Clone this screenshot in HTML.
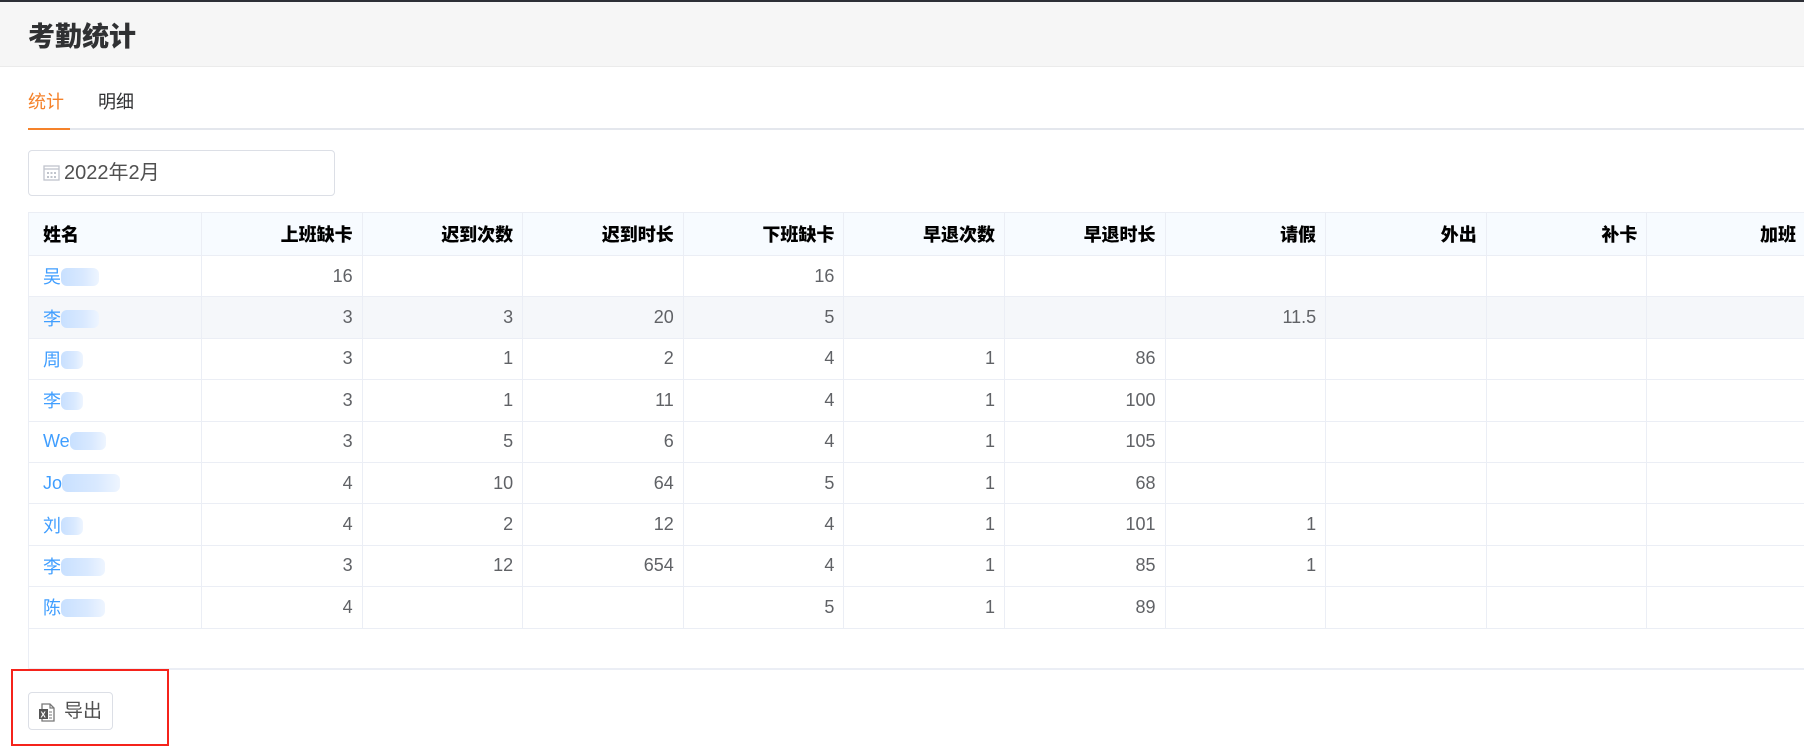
<!DOCTYPE html>
<html><head><meta charset="utf-8"><style>
*{margin:0;padding:0;box-sizing:border-box}
body{width:1804px;height:755px;overflow:hidden;background:#fff;font-family:"Liberation Sans","Noto Sans CJK SC",sans-serif;position:relative}
.top{position:absolute;left:0;top:0;width:1804px;height:2px;background:#2d2f36}
.hdr{position:absolute;left:0;top:2px;width:1804px;height:65px;background:#f6f6f6;border-bottom:1px solid #ebebeb}
.hdr h1{position:absolute;left:28px;top:18px;font-size:27px;font-weight:900;color:#303133;line-height:34px}
.tab{position:absolute;top:90px;font-size:18px;line-height:24px}
.tabline{position:absolute;left:28px;top:128px;width:1776px;height:2px;background:#e4e7ed}
.tabact{position:absolute;left:28px;top:128px;width:42px;height:2px;background:#f5822a}
.date{position:absolute;left:28px;top:150px;width:307px;height:46px;border:1px solid #dcdfe6;border-radius:4px}
.date span{position:absolute;left:35px;top:10px;font-size:20px;color:#505050;line-height:24px}
table{position:absolute;left:28px;top:212px;border-collapse:collapse;table-layout:fixed;width:1778px}
td,th{border:1px solid #ebeef5;height:41.4px;padding:0 9px;font-size:18px;text-align:right;color:#606266;white-space:nowrap;overflow:hidden}
th{height:43px;background:#f7fbff;color:#000;font-weight:900}
th:first-child,td:first-child{text-align:left;padding-left:14px}
td:first-child{color:#409eff}
tr.alt td{background:#f5f7fa}
.b{display:inline-block;height:18px;vertical-align:-3px;background:linear-gradient(90deg,#c8e0ff,#d9e9ff 60%,#eef5ff);border-radius:6px}
.bot{position:absolute;left:28px;top:668px;width:1776px;height:2px;background:#ebeef5}
.side{position:absolute;left:28px;top:628px;width:1px;height:40px;background:#ebeef5}
.btn{position:absolute;left:28px;top:692px;width:85px;height:38px;border:1px solid #dcdfe6;border-radius:4px;font-size:19px;color:#505050}
.btn span{position:absolute;left:35px;top:7px;line-height:24px}
.red{position:absolute;left:11px;top:669px;width:158px;height:77px;border:2px solid #f5231b}
</style></head><body>
<div class="top"></div>
<div class="hdr"><h1>考勤统计</h1></div>
<div class="tab" style="left:28px;color:#f5822a">统计</div>
<div class="tab" style="left:98px;color:#303133">明细</div>
<div class="tabline"></div><div class="tabact"></div>
<div class="date"><svg style="position:absolute;left:14px;top:13px" width="17" height="17" viewBox="0 0 17 17"><rect x="1" y="2" width="15" height="14" fill="none" stroke="#c0c4cc" stroke-width="1.3"/><line x1="1" y1="5" x2="16" y2="5" stroke="#c0c4cc" stroke-width="1.3"/><g fill="#c0c4cc"><rect x="4" y="8" width="2" height="2"/><rect x="7.5" y="8" width="2" height="2"/><rect x="11" y="8" width="2" height="2"/><rect x="4" y="12" width="2" height="2"/><rect x="7.5" y="12" width="2" height="2"/><rect x="11" y="12" width="2" height="2"/></g></svg><span>2022年2月</span></div>
<table>
<colgroup><col style="width:173px"><col span="9" style="width:160.6px"><col></colgroup>
<tr><th>姓名</th><th>上班缺卡</th><th>迟到次数</th><th>迟到时长</th><th>下班缺卡</th><th>早退次数</th><th>早退时长</th><th>请假</th><th>外出</th><th>补卡</th><th>加班</th></tr>
<tr><td>吴<span class="b" style="width:38px"></span></td><td>16</td><td></td><td></td><td>16</td><td></td><td></td><td></td><td></td><td></td><td></td></tr>
<tr class="alt"><td>李<span class="b" style="width:38px"></span></td><td>3</td><td>3</td><td>20</td><td>5</td><td></td><td></td><td>11.5</td><td></td><td></td><td></td></tr>
<tr><td>周<span class="b" style="width:22px"></span></td><td>3</td><td>1</td><td>2</td><td>4</td><td>1</td><td>86</td><td></td><td></td><td></td><td></td></tr>
<tr><td>李<span class="b" style="width:22px"></span></td><td>3</td><td>1</td><td>11</td><td>4</td><td>1</td><td>100</td><td></td><td></td><td></td><td></td></tr>
<tr><td>We<span class="b" style="width:36px"></span></td><td>3</td><td>5</td><td>6</td><td>4</td><td>1</td><td>105</td><td></td><td></td><td></td><td></td></tr>
<tr><td>Jo<span class="b" style="width:58px"></span></td><td>4</td><td>10</td><td>64</td><td>5</td><td>1</td><td>68</td><td></td><td></td><td></td><td></td></tr>
<tr><td>刘<span class="b" style="width:22px"></span></td><td>4</td><td>2</td><td>12</td><td>4</td><td>1</td><td>101</td><td>1</td><td></td><td></td><td></td></tr>
<tr><td>李<span class="b" style="width:44px"></span></td><td>3</td><td>12</td><td>654</td><td>4</td><td>1</td><td>85</td><td>1</td><td></td><td></td><td></td></tr>
<tr><td>陈<span class="b" style="width:44px"></span></td><td>4</td><td></td><td></td><td>5</td><td>1</td><td>89</td><td></td><td></td><td></td><td></td></tr>
</table>
<div class="side"></div>
<div class="bot"></div>
<div class="btn"><svg style="position:absolute;left:9px;top:10px" width="18" height="19" viewBox="0 0 18 19"><path d="M4 1h8l4 4v13H4z" fill="#fff" stroke="#777" stroke-width="1.3"/><path d="M12 1v4h4" fill="none" stroke="#777" stroke-width="1.2"/><line x1="11" y1="9" x2="14" y2="9" stroke="#777"/><line x1="11" y1="12" x2="14" y2="12" stroke="#777"/><line x1="11" y1="15" x2="14" y2="15" stroke="#777"/><rect x="1" y="6" width="9" height="10" fill="#555"/><text x="2.5" y="14.5" font-size="8" font-weight="bold" fill="#fff" font-family="Liberation Sans">X</text></svg><span>导出</span></div>
<div class="red"></div>
</body></html>
